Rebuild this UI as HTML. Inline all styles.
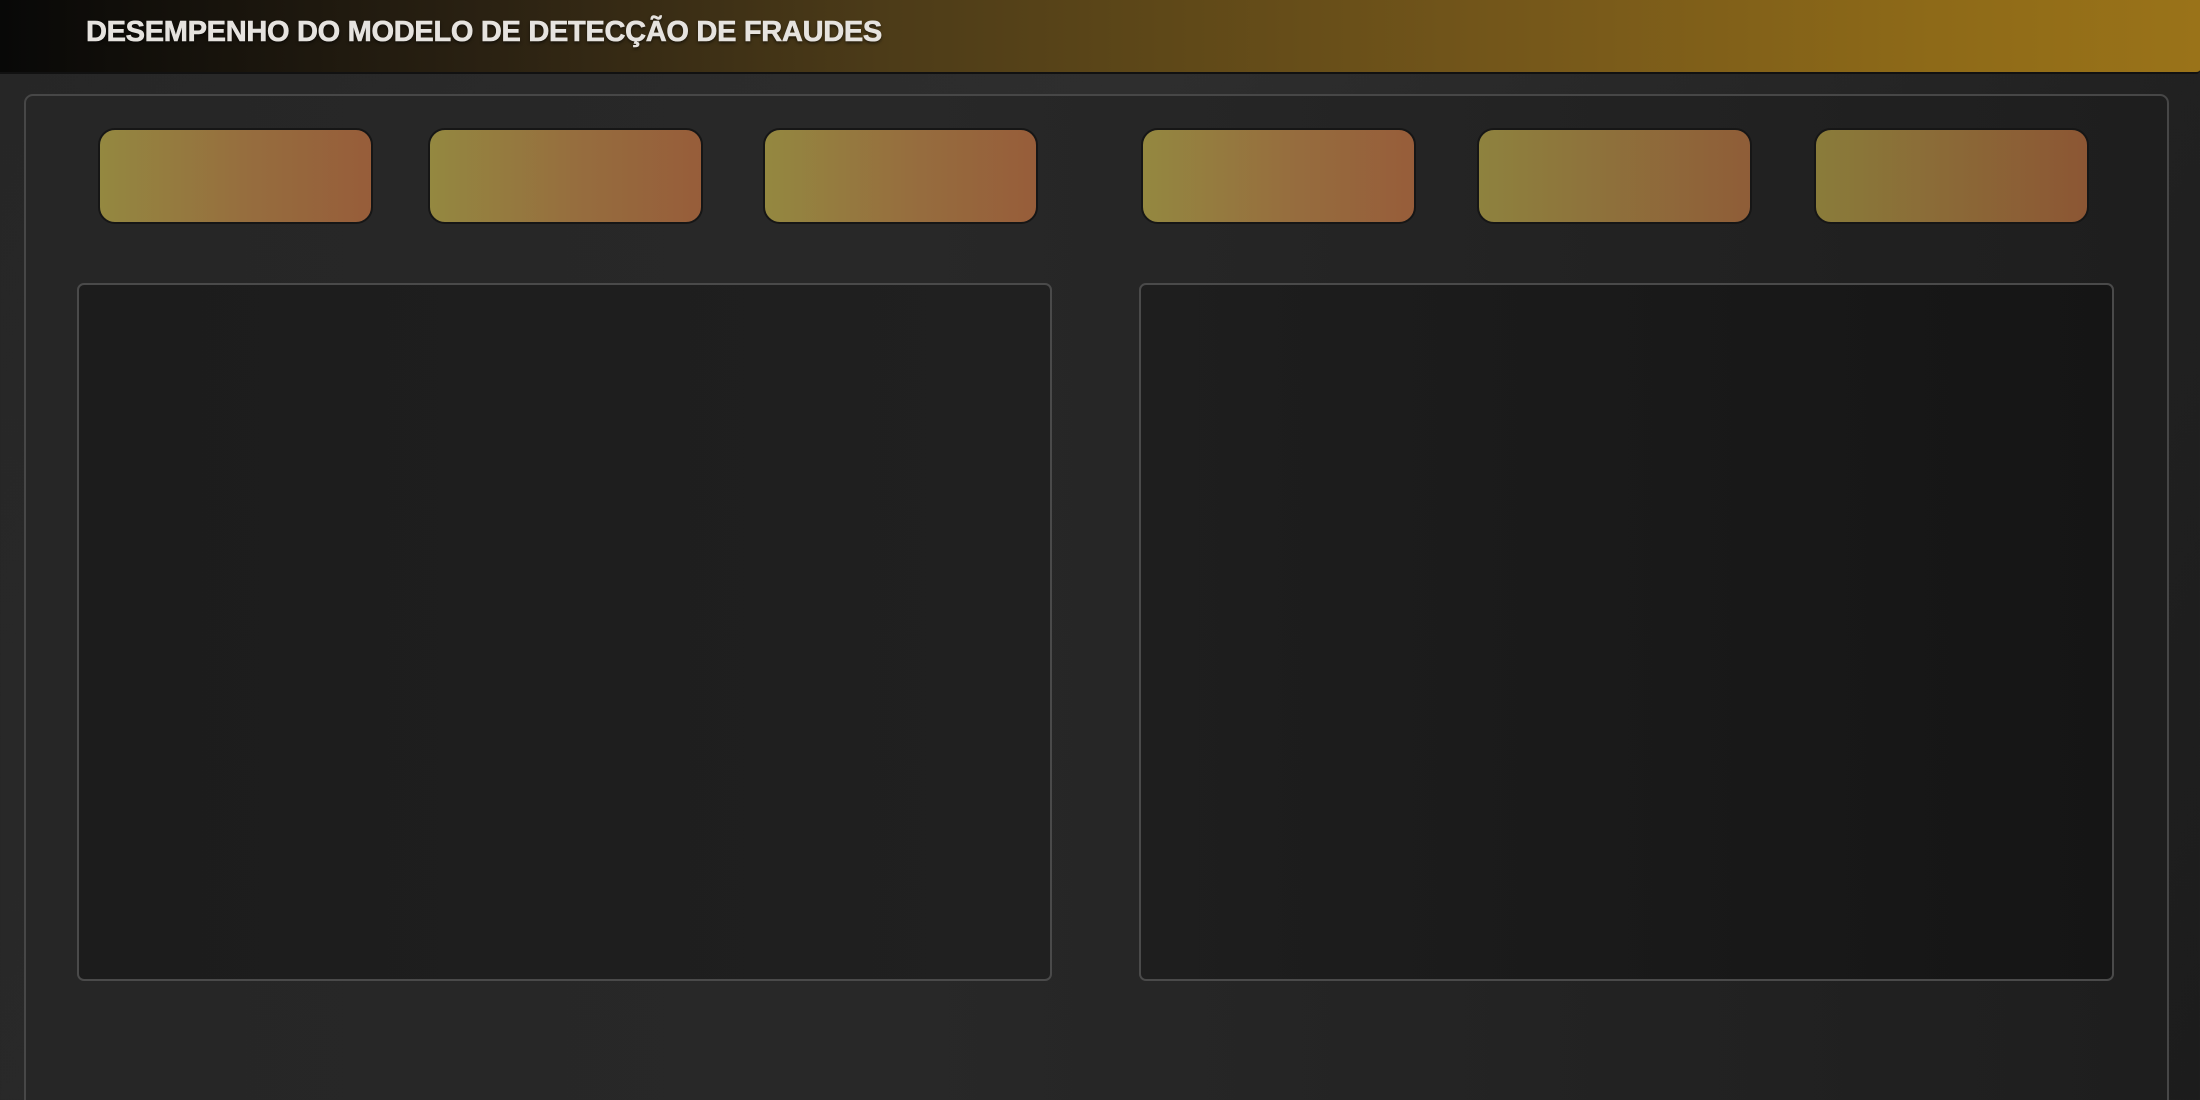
<!DOCTYPE html>
<html><head><meta charset="utf-8"><style>
*{margin:0;padding:0;box-sizing:border-box}
html,body{width:2200px;height:1100px;overflow:hidden}
body{position:relative;background:linear-gradient(110deg,#262626 0%,#2e2e2e 45%,#262626 70%,#1c1c1c 100%);font-family:"Liberation Sans",sans-serif}
.hdr{position:absolute;left:0;top:0;width:2200px;height:74px;background:linear-gradient(90deg,#080807 0%,#2a2112 22%,#4c3b18 40%,#5a4518 50%,#76581a 70%,#8e6a18 88%,#9a7319 100%);border-bottom:2px solid #111;border-radius:0 0 4px 0}
.hdr h1{position:absolute;left:86px;top:16px;font-size:29px;font-weight:700;color:#e6e3df;letter-spacing:-0.3px;white-space:nowrap;text-shadow:0 2px 3px rgba(0,0,0,.6);-webkit-text-stroke:0.6px #e6e3df}
.panel{position:absolute;left:24px;top:94px;width:2145px;height:1020px;border:2px solid #474747;border-radius:9px;background:linear-gradient(90deg,#262626 0%,#282828 40%,#1e1e1e 100%)}
.card{position:absolute;top:128px;width:275px;height:96px;border:2px solid #161616;border-radius:17px;background:linear-gradient(90deg,#948840 0%,#966d3e 55%,#975d3a 100%)}
.chart{position:absolute;top:283px;width:975px;height:698px;border:2px solid #4a4a4a;border-radius:7px;background:#1d1d1d}
</style></head><body>
<div class="hdr"><h1>DESEMPENHO DO MODELO DE DETECÇÃO DE FRAUDES</h1></div>
<div class="panel"></div>
<div class="card" style="left:98px"></div>
<div class="card" style="left:428px"></div>
<div class="card" style="left:763px"></div>
<div class="card" style="left:1141px"></div>
<div class="card" style="left:1477px;background:linear-gradient(90deg,#8e823e,#8f5d38)"></div>
<div class="card" style="left:1814px;background:linear-gradient(90deg,#8a7c3a,#8c5634)"></div>
<div class="chart" style="left:77px;background:linear-gradient(90deg,#1c1c1c,#202020)"></div>
<div class="chart" style="left:1139px;background:linear-gradient(90deg,#1e1e1e,#151515)"></div>
</body></html>
